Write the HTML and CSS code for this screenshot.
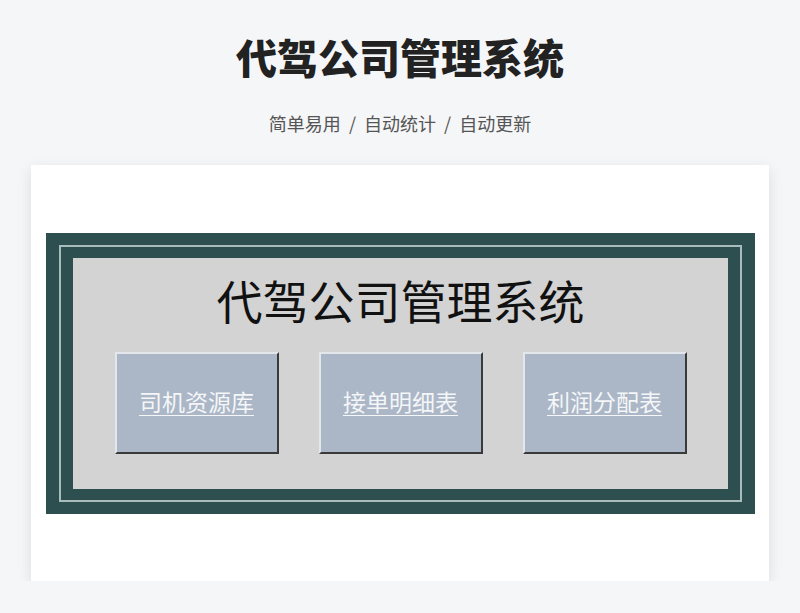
FILE: index.html
```html
<!DOCTYPE html>
<html lang="zh-CN">
<head>
  <meta charset="UTF-8" />
  <meta name="viewport" content="width=device-width, initial-scale=1.0"/>
  <title>代驾公司管理系统</title>
  <link rel="stylesheet" href="styles.css">
</head>
<body>
  <header class="hero">
    <h1>代驾公司管理系统</h1>
    <p class="tagline">简单易用 <span>/</span> 自动统计 <span>/</span> 自动更新</p>
  </header>

  <div class="card">
    <div class="frame">
      <div class="frame-line">
        <div class="panel">
          <h2>代驾公司管理系统</h2>
          <div class="links">
            <a class="tile" href="#">司机资源库</a>
            <a class="tile" href="#">接单明细表</a>
            <a class="tile" href="#">利润分配表</a>
          </div>
        </div>
      </div>
    </div>
  </div>
</body>
</html>
```

FILE: styles.css
```css
* {
  box-sizing: border-box;
}

body {
  margin: 0;
  font-family: "Noto Sans CJK SC", "Noto Sans", sans-serif;
  background: #f5f6f8;
  color: #222;
}

.hero {
  text-align: center;
  padding-top: 26px;
}

.hero h1 {
  margin: 0;
  font-size: 41px;
  line-height: 60px;
  font-weight: 900;
  color: #222;
}

.tagline {
  margin: 24px 0 0;
  font-size: 18px;
  line-height: 26px;
  color: #555;
}

.tagline span {
  margin: 0 4px;
}

.card {
  margin: 29px 31px 0;
  height: 416px;
  background: #fff;
  padding: 68px 14px 0 15px;
  box-shadow: 0 4px 14px rgba(0, 0, 0, 0.1);
}

.frame {
  background: #2d4f4f;
  padding: 12px 13px;
}

.frame-line {
  border: 2px solid #a9bcbc;
  padding: 11px 12px;
}

.panel {
  background: #d3d3d3;
  padding: 10px 0 35px;
  text-align: center;
}

.panel h2 {
  margin: 0;
  font-size: 46px;
  line-height: 62px;
  font-weight: 400;
  color: #111;
}

.links {
  display: flex;
  justify-content: center;
  gap: 40px;
  margin-top: 22px;
}

.tile {
  width: 164px;
  height: 102px;
  display: flex;
  align-items: center;
  justify-content: center;
  padding-bottom: 4px;
  background: #abb7c7;
  border: 2px solid;
  border-color: #e3e7ec #3a3a3a #3a3a3a #e3e7ec;
  color: #f4f6f8;
  font-size: 23px;
  text-decoration: underline;
  text-underline-offset: 4px;
  text-decoration-thickness: 1px;
}
```
